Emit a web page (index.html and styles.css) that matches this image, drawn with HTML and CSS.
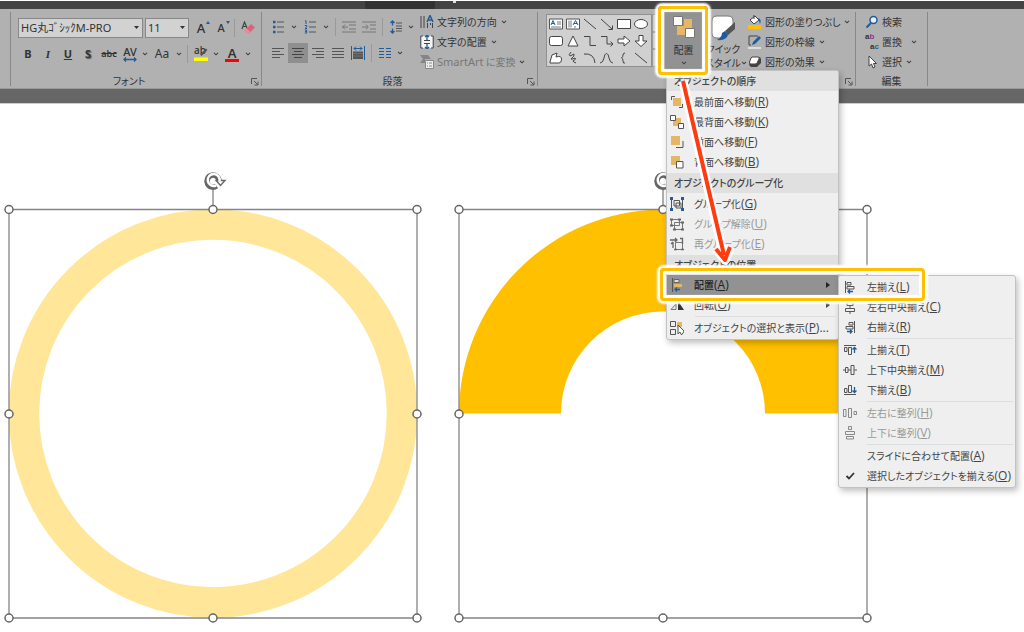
FILE: index.html
```html
<!DOCTYPE html>
<html lang="ja">
<head>
<meta charset="utf-8">
<title>オブジェクトの配置</title>
<link rel="stylesheet" href="styles.css">
</head>
<body>
<svg class="symbols" aria-hidden="true">
  <symbol id="chev" viewBox="0 0 6 4"><path d="M1 .8 3 2.8 5 .8" fill="none" stroke="#444" stroke-width="1.1"/></symbol>
  <symbol id="tri" viewBox="0 0 5 3"><path d="M0 0H5L2.500 3Z" fill="#333"/></symbol>
  <symbol id="launch" viewBox="0 0 8 8"><path d="M.5 6V.5H6M3 3 6.500 6.500M7 3.500V7H3.500" fill="none" stroke="#555"/></symbol>
</svg>

<header class="titlebar"><span class="active-tab"></span><span class="tick"></span></header>

<div class="ribbon">
  <section class="group font-group">
    <div class="body">
      <div class="row">
        <span class="combo family"><select aria-label="フォント名"><option>HG丸ｺﾞｼｯｸM-PRO</option></select><svg class="tri"><use href="#tri"/></svg></span>
        <span class="combo size"><select aria-label="フォント サイズ"><option>11</option></select><svg class="tri"><use href="#tri"/></svg></span>
        <button class="tool w20 big" aria-label="拡大">A<svg class="mark" viewBox="0 0 4 3"><path d="M0 3 2 0 4 3Z" fill="#1f5c99"/></svg></button>
        <button class="tool w20 mid" aria-label="縮小">A<svg class="mark" viewBox="0 0 4 3"><path d="M0 0H4L2 3Z" fill="#1f5c99"/></svg></button>
        <i class="sep"></i>
        <button class="tool w20" aria-label="書式のクリア"><svg width="14" height="14" viewBox="0 0 14 14"><path d="M1 8 3.500 1 6 7M2 5.500H5.500" fill="none" stroke="#444" stroke-width="1.200"/><path d="M3.500 9.500 10 3 14 6.500 7.500 13Z" fill="#dd6274"/><path d="M3.500 9.500 5.500 7.500 9.500 11 7.500 13Z" fill="#ee8b96"/></svg></button>
      </div>
      <div class="row">
        <button class="tool w20 bold">B</button>
        <button class="tool w20 bold italic">I</button>
        <button class="tool w20 bold under">U</button>
        <button class="tool w20 bold shade">S</button>
        <button class="tool w22 strike">abc</button>
        <button class="tool w20 spacing">AV<svg width="14" height="5" viewBox="0 0 14 5"><path d="M1 2.500H13M3 .5 1 2.500 3 4.500M11 .5 13 2.500 11 4.500" fill="none" stroke="#1f5c99" stroke-width="1.300"/></svg></button>
        <svg class="chev"><use href="#chev"/></svg>
        <button class="tool w24 aa">Aa</button>
        <svg class="chev"><use href="#chev"/></svg>
        <i class="sep"></i>
        <button class="tool w20 hl" aria-label="蛍光ペン">ab<svg width="14" height="14" viewBox="0 0 14 14"><path d="M6 7.500 12 1.500 13.500 3 7.500 9Z" fill="#555"/><path d="M0 10.500H14V14H0Z" fill="#ff0"/></svg></button>
        <svg class="chev"><use href="#chev"/></svg>
        <button class="tool w22 fc" aria-label="フォントの色">A<i></i></button>
        <svg class="chev"><use href="#chev"/></svg>
      </div>
    </div>
    <footer><span>フォント</span><button aria-label="フォントの詳細"><svg width="8" height="8"><use href="#launch"/></svg></button></footer>
  </section>

  <section class="group para-group">
    <div class="body split">
      <div class="stack">
        <div class="row">
          <button class="tool w20" aria-label="箇条書き"><svg width="13" height="14" viewBox="0 0 13 14"><path d="M1 2H3.500M1 7H3.500M1 12H3.500" stroke="#1f5c99" stroke-width="2.500"/><path d="M5 2H12M5 7H12M5 12H12" stroke="#555"/></svg></button>
          <svg class="chev wide"><use href="#chev"/></svg>
          <button class="tool w20" aria-label="段落番号"><svg width="13" height="14" viewBox="0 0 13 14"><path d="M1 .8H2V4M.8 5.500H2.700V7L1 8.500H3M.8 10H2.700V13H.8M1 11.500H2.500" fill="none" stroke="#1f5c99"/><path d="M5 2H12M5 7H12M5 12H12" stroke="#555"/></svg></button>
          <svg class="chev wide"><use href="#chev"/></svg>
          <i class="sep"></i>
          <button class="tool w20" aria-label="インデントを減らす" disabled><svg width="14" height="12" viewBox="0 0 14 12"><path d="M0 1H14M7 4H14M7 8H14M0 11H14M0 6H6M3 3.500 .8 6 3 8.500" fill="none" stroke="#777"/></svg></button>
          <button class="tool w20" aria-label="インデントを増やす" disabled><svg width="14" height="12" viewBox="0 0 14 12"><path d="M0 1H14M8 4H14M8 8H14M0 11H14M0 6H6M4 3.500 6.200 6 4 8.500" fill="none" stroke="#777"/></svg></button>
          <i class="sep"></i>
          <button class="tool w20" aria-label="行間"><svg width="13" height="14" viewBox="0 0 13 14"><path d="M2.500 1V5.500M.5 3 2.500 1 4.500 3M2.500 8.500V13M.5 11 2.500 13 4.500 11" fill="none" stroke="#1f5c99" stroke-width="1.300"/><path d="M6 3H12M6 6H12M6 8.500H12M6 11H12" stroke="#555"/></svg></button>
          <svg class="chev"><use href="#chev"/></svg>
        </div>
        <div class="row">
          <button class="tool w20" aria-label="左揃え"><svg width="12" height="11" viewBox="0 0 12 11"><path d="M0 .5H12M0 3.500H8M0 6.500H12M0 9.500H8" stroke="#555"/></svg></button>
          <button class="tool w20 on" aria-label="中央揃え"><svg width="12" height="11" viewBox="0 0 12 11"><path d="M0 .5H12M2 3.500H10M0 6.500H12M2 9.500H10" stroke="#444"/></svg></button>
          <button class="tool w20" aria-label="右揃え"><svg width="12" height="11" viewBox="0 0 12 11"><path d="M0 .5H12M4 3.500H12M0 6.500H12M4 9.500H12" stroke="#555"/></svg></button>
          <button class="tool w20" aria-label="両端揃え"><svg width="12" height="11" viewBox="0 0 12 11"><path d="M0 .5H12M0 3.500H12M0 6.500H12M0 9.500H12" stroke="#555"/></svg></button>
          <button class="tool w20" aria-label="均等割り付け"><svg width="14" height="14" viewBox="0 0 14 14"><path d="M.5 0V14M13.500 0V14M3 2.500H11M5 .5 3 2.500 5 4.500M9 .5 11 2.500 9 4.500" fill="none" stroke="#1f5c99"/><path d="M2 5.500H12V13H2Z" fill="#555"/><path d="M2 7.500H12M2 10H12" stroke="#888" stroke-width=".6"/></svg></button>
          <i class="sep"></i>
          <button class="tool w20" aria-label="段組み"><svg width="12" height="10" viewBox="0 0 12 10"><path d="M0 .5H5M0 3.500H5M0 6.500H5M0 9.500H5M7 .5H12M7 3.500H12M7 6.500H12M7 9.500H12" stroke="#1f5c99"/></svg></button>
          <svg class="chev"><use href="#chev"/></svg>
        </div>
      </div>
      <div class="list">
        <button class="cmd"><svg width="14" height="14" viewBox="0 0 14 14"><path d="M1 1V13M4 1V13M7.500 8V13M10.500 8V10M12.500 8V13" stroke="#444"/><path d="M7 7 10 .5 13 7M8 5H12" fill="none" stroke="#1f5c99" stroke-width="1.500"/></svg>文字列の方向<svg class="chev"><use href="#chev"/></svg></button>
        <button class="cmd"><svg width="14" height="14" viewBox="0 0 14 14"><path d="M1 1H13V13H1Z" fill="#f4f4f4"/><path d="M3 1H.8V13H3M11 1H13.200V13H11M4 5.500H10M4 8.500H10" fill="none" stroke="#444"/><path d="M7 0V5M5 2 7 0 9 2M7 9V14M5 12 7 14 9 12" fill="none" stroke="#1f5c99" stroke-width="1.300"/></svg>文字の配置<svg class="chev"><use href="#chev"/></svg></button>
        <button class="cmd" disabled><svg width="14" height="14" viewBox="0 0 14 14"><path d="M0 0H8L11 4H5V8H0L3 4Z" fill="#858585"/><path d="M5.500 5.500H13.500V13.500H5.500Z" fill="#ededed" stroke="#888"/><path d="M7 8H8M9 8H12M7 11H8M9 11H12" stroke="#888"/></svg><span><span class="latin">SmartArt</span> に変換</span><svg class="chev"><use href="#chev"/></svg></button>
      </div>
    </div>
    <footer><span>段落</span><button aria-label="段落の詳細"><svg width="8" height="8"><use href="#launch"/></svg></button></footer>
  </section>

  <section class="group draw-group">
    <div class="body split">
      <div class="gallery">
        <button aria-label="テキスト"><svg viewBox="0 0 14 12"><path d="M.5 1H13.500V11H.5Z" fill="#fff" stroke="#555"/><path d="M2 7 4 2.500 6 7M3 5.500H5" fill="none" stroke="#1f5c99"/><path d="M8 4H12M8 6H12M2 9H12" stroke="#555" stroke-width=".8"/></svg></button>
        <button aria-label="縦書き"><svg viewBox="0 0 14 12"><path d="M.5 1H13.500V11H.5Z" fill="#fff" stroke="#555"/><path d="M7 7 9.500 2.500 12 7M8 5.500H11" fill="none" stroke="#1f5c99"/><path d="M3 2.500V9.500M5 2.500V9.500M9 8V10" stroke="#555" stroke-width=".8"/></svg></button>
        <button aria-label="直線"><svg viewBox="0 0 14 12"><path d="M1 1 13 11" stroke="#444"/></svg></button>
        <button aria-label="矢印"><svg viewBox="0 0 14 12"><path d="M1 1 12 11M12.500 7.500V11.500H8.500" fill="none" stroke="#444"/></svg></button>
        <button aria-label="四角形"><svg viewBox="0 0 14 12"><path d="M.5 1.500H13.500V10.500H.5Z" fill="#fff" stroke="#444"/></svg></button>
        <button aria-label="楕円"><svg viewBox="0 0 14 12"><ellipse cx="7" cy="6" rx="6.500" ry="4.500" fill="#fff" stroke="#444"/></svg></button>
        <button aria-label="角丸四角形"><svg viewBox="0 0 14 12"><rect x=".5" y="1.500" width="13" height="9" rx="2" fill="#fff" stroke="#444"/></svg></button>
        <button aria-label="三角形"><svg viewBox="0 0 14 12"><path d="M2 11 7 1 12 11Z" fill="#fff" stroke="#444"/></svg></button>
        <button aria-label="カギ線"><svg viewBox="0 0 14 12"><path d="M1 1.500H7V10.500H13" fill="none" stroke="#444"/></svg></button>
        <button aria-label="カギ線矢印"><svg viewBox="0 0 14 12"><path d="M1 1.500H7V9H13M10.500 6.500 13 9 10.500 11.500" fill="none" stroke="#444"/></svg></button>
        <button aria-label="右矢印"><svg viewBox="0 0 14 12"><path d="M1 4H7V1L13 6 7 11V8H1Z" fill="#fff" stroke="#444"/></svg></button>
        <button aria-label="下矢印"><svg viewBox="0 0 14 12"><path d="M5 .5H9V6H13L7 11.500 1 6H5Z" fill="#fff" stroke="#444"/></svg></button>
        <button aria-label="フリーフォーム"><svg viewBox="0 0 14 12"><path d="M1 10 3 3 8 1 7 5Q13 3 12.500 8 12 11 10 11H1Z" fill="#fff" stroke="#444"/></svg></button>
        <button aria-label="フリーハンド"><svg viewBox="0 0 14 12"><path d="M5 0Q2 3 4 4 6 3 8 2 9 4 5 7 5 8 9 6 11 7 7 9 7 10 10 11" fill="none" stroke="#444"/></svg></button>
        <button aria-label="円弧"><svg viewBox="0 0 14 12"><path d="M1 2Q11 1 12 11" fill="none" stroke="#444"/></svg></button>
        <button aria-label="曲線"><svg viewBox="0 0 14 12"><path d="M0 11Q3 11 4 6C5 0 8 0 9 6Q10 11 13 11" fill="none" stroke="#444"/></svg></button>
        <button aria-label="左中かっこ"><svg viewBox="0 0 14 12"><path d="M8 1Q6 1 6 3T4.500 6Q6 6 6 9T8 11" fill="none" stroke="#444"/></svg></button>
        <button aria-label="線"><svg viewBox="0 0 14 12"><path d="M1 1 13 11" stroke="#444"/></svg></button>
      </div>
      <div class="scroller"><i></i><i></i><i></i></div>
      <button class="large arrange">
        <svg width="24" height="24" viewBox="0 0 24 24"><path d="M12 4H20V13H12ZM5 11H13V20H5Z" fill="#e6b667"/><path d="M1.500 1.500H10.500V10.500H1.500ZM13.500 13.500H22.500V22.500H13.500Z" fill="#fff" stroke="#777"/></svg>
        <span>配置</span><svg class="chev"><use href="#chev"/></svg>
      </button>
      <button class="large quick">
        <svg width="26" height="28" viewBox="0 0 26 28"><path d="M7 2H18Q23 2 23 7V15L15 24H7Q2 24 2 19V7Q2 2 7 2Z" fill="#fff" stroke="#777"/><path d="M15 17 25 8V15L18 21Z" fill="#555"/><path d="M15 17 18 20Q17 27 7 26 12 23 12 19Z" fill="#1f5c99"/></svg>
        <span class="two">クイック<br>スタイル</span>
      </button>
      <svg class="chev low"><use href="#chev"/></svg>
      <div class="list">
        <button class="cmd"><svg width="14" height="14" viewBox="0 0 14 14"><path d="M0 10H13V14H0Z" fill="#ffc000"/><path d="M2 5 7 1 11 5 6 9Z" fill="#fff" stroke="#444"/><path d="M6 0V4" stroke="#444"/><path d="M10 3Q14 4 12 9L11 6Z" fill="#1f5c99"/></svg>図形の塗りつぶし<svg class="chev"><use href="#chev"/></svg></button>
        <button class="cmd"><svg width="14" height="14" viewBox="0 0 14 14"><path d="M10 1H1V10H3" fill="none" stroke="#444"/><path d="M4 10 5 7 11 1 13 3 7 9Z" fill="#1f5c99"/><path d="M0 12H13V14H0Z" fill="#ddd"/></svg>図形の枠線<svg class="chev"><use href="#chev"/></svg></button>
        <button class="cmd"><svg width="14" height="14" viewBox="0 0 14 14"><path d="M4 2H12L13 4V8L9 12H3L1 10Z" fill="#444"/><path d="M4 2H10Q12 2 11 4L9 8Q8.500 9 7 9H3Q1 9 1.500 7L3 3Z" fill="#fff" stroke="#444"/></svg>図形の効果<svg class="chev"><use href="#chev"/></svg></button>
      </div>
    </div>
    <footer><button aria-label="図形の書式設定"><svg width="8" height="8"><use href="#launch"/></svg></button></footer>
  </section>

  <section class="group edit-group">
    <div class="body">
      <div class="list">
        <button class="cmd"><svg width="14" height="14" viewBox="0 0 14 14"><circle cx="8.500" cy="5" r="3.500" fill="#eee" stroke="#1f5c99" stroke-width="1.500"/><path d="M6 8 1.500 12.500" stroke="#1f5c99" stroke-width="2"/></svg>検索</button>
        <button class="cmd"><span class="swap"><span>a<b>b</b></span><span>a<em>c</em></span></span>置換<svg class="chev far"><use href="#chev"/></svg></button>
        <button class="cmd"><svg width="14" height="14" viewBox="0 0 14 14"><path d="M4 1V11L6.500 9 8 13 10 12 8.500 8.500H11.500Z" fill="#fff" stroke="#444"/></svg>選択<svg class="chev"><use href="#chev"/></svg></button>
      </div>
    </div>
    <footer><span>編集</span></footer>
  </section>
</div>
<div class="band"></div>

<main class="canvas">
  <svg class="shape ring" width="420" height="456" viewBox="0 0 420 456">
    <circle cx="210" cy="246.500" r="189" fill="none" stroke="#ffe699" stroke-width="30.500"/>
    <path d="M6 42.500H414V451H6ZM210 42V22" fill="none" stroke="#858585" stroke-width="1.300"/>
    <g fill="#fff" stroke="#666" stroke-width="1.500"><circle cx="6" cy="42.500" r="4"/><circle cx="210" cy="42.500" r="4"/><circle cx="414" cy="42.500" r="4"/><circle cx="6" cy="247" r="4"/><circle cx="414" cy="247" r="4"/><circle cx="6" cy="451" r="4"/><circle cx="210" cy="451" r="4"/><circle cx="414" cy="451" r="4"/></g>
    <path d="M216 14A6 6 0 1 0 213.500 19" fill="none" stroke="#666" stroke-width="5.500"/><path d="M213 13.500H222L217.500 18.500Z" fill="#fff" stroke="#666" stroke-width="1.400"/><path d="M216.500 14.500A6 6 0 1 0 213 18.500" fill="none" stroke="#fff" stroke-width="2.500"/>
  </svg>
  <svg class="shape arc" width="420" height="456" viewBox="0 0 420 456">
    <path d="M6 246.500A204 204 0 0 1 414 246.500H312A102 102 0 0 0 108 246.500Z" fill="#ffc000"/>
    <path d="M6 42.500H414V451H6ZM210 42V22" fill="none" stroke="#858585" stroke-width="1.300"/>
    <g fill="#fff" stroke="#666" stroke-width="1.500"><circle cx="6" cy="42.500" r="4"/><circle cx="210" cy="42.500" r="4"/><circle cx="414" cy="42.500" r="4"/><circle cx="6" cy="247" r="4"/><circle cx="414" cy="247" r="4"/><circle cx="6" cy="451" r="4"/><circle cx="210" cy="451" r="4"/><circle cx="414" cy="451" r="4"/></g>
    <path d="M216 14A6 6 0 1 0 213.500 19" fill="none" stroke="#666" stroke-width="5.500"/><path d="M216.500 14.500A6 6 0 1 0 213 18.500" fill="none" stroke="#fff" stroke-width="2.500"/>
  </svg>
</main>

<nav class="menu main-menu">
  <h2>オブジェクトの順序</h2>
  <div class="items">
    <button><svg viewBox="0 0 14 14"><path d="M5 1.500H1.500V5M9 12.500H12.500V9" fill="none" stroke="#555"/><path d="M3 3H11V11H3Z" fill="#e6b667"/></svg><span>最前面へ移動<span class="key">(<u>R</u>)</span></span></button>
    <button><svg viewBox="0 0 14 14"><path d="M3 3H11V11H3Z" fill="#e6b667"/><path d="M.5 .5H5.500V5.500H.5ZM8.500 8.500H13.500V13.500H8.500Z" fill="#fff" stroke="#555"/></svg><span>最背面へ移動<span class="key">(<u>K</u>)</span></span></button>
    <button><svg viewBox="0 0 14 14"><path d="M13 6V12.500H6" fill="none" stroke="#555"/><path d="M1 1H10V10H1Z" fill="#e6b667"/></svg><span>前面へ移動<span class="key">(<u>F</u>)</span></span></button>
    <button><svg viewBox="0 0 14 14"><path d="M1 1H10V10H1Z" fill="#e6b667"/><path d="M6.500 6.500H13V13H6.500Z" fill="#fff" stroke="#555"/></svg><span>背面へ移動<span class="key">(<u>B</u>)</span></span></button>
  </div>
  <h2>オブジェクトのグループ化</h2>
  <div class="items">
    <button><svg viewBox="0 0 14 14"><path d="M4 3.500H9.500V9H4ZM6 6H11V11H6ZM1.500 3V11M12.500 3V11" fill="none" stroke="#555"/><path d="M0 0H3V3H0ZM11 0H14V3H11ZM0 11H3V14H0ZM11 11H14V14H11Z" fill="#1f5c99"/></svg><span>グループ化<span class="key">(<u>G</u>)</span></span></button>
    <button disabled><svg viewBox="0 0 14 14"><path d="M1.500 2.500H9.500V8.500H1.500ZM4.500 5.500H12.500V12.500H4.500Z" fill="none" stroke="#777"/><path d="M0 2.500H3M8 2.500H11M0 8.500H3M3 12.500H6M11 12.500H14M11 5.500H14" stroke="#666" stroke-width="2"/></svg><span>グループ解除<span class="key">(<u>U</u>)</span></span></button>
    <button disabled><svg viewBox="0 0 14 14"><path d="M5.500 5.500H12.500V12.500H5.500Z" fill="none" stroke="#777"/><path d="M0 3H7M5 1 7 3 5 5M3 5V11M1 7 3 5M4 12.500H7M11 12.500H14M12.500 1V7M10 1.500H13" fill="none" stroke="#666" stroke-width="1.300"/></svg><span>再グループ化<span class="key">(<u>E</u>)</span></span></button>
  </div>
  <h2>オブジェクトの位置</h2>
  <button class="selected"><svg viewBox="0 0 14 14"><path d="M2.500 0V14" stroke="#555"/><path d="M4 1.500H9V4.500H4Z" fill="#ddd" stroke="#666"/><path d="M4 6H12V9H4Z" fill="#e6b667"/><path d="M5 11.500H10M7 9.500 5 11.500 7 13.500" fill="none" stroke="#1f5c99" stroke-width="1.300"/></svg><span>配置<span class="key">(<u>A</u>)</span></span><svg class="sub" viewBox="0 0 4 6"><path d="M0 0 4 3 0 6Z" fill="#222"/></svg></button>
  <button><svg viewBox="0 0 14 14"><path d="M1 11.500H6V6Z" fill="none" stroke="#777"/><path d="M8 12V3L14 12Z" fill="#333"/></svg><span>回転<span class="key">(<u>O</u>)</span></span><svg class="sub" viewBox="0 0 4 6"><path d="M0 0 4 3 0 6Z" fill="#444"/></svg></button>
  <hr>
  <button><svg viewBox="0 0 14 14"><path d="M.5 .5H5.500V5.500H.5ZM.5 8.500H5.500V13.500H.5Z" fill="none" stroke="#555"/><path d="M7 1H12V6H7Z" fill="#e6b667"/><path d="M8 4V13L10 11 11.500 14 13 12 14 10Z" fill="#fff" stroke="#555"/></svg><span>オブジェクトの選択と表示<span class="key">(<u>P</u>)...</span></span></button>
</nav>

<nav class="menu sub-menu">
  <button><svg viewBox="0 0 14 14"><path d="M2.500 1V13M4 2.500H8V5H4ZM4 6.500H11V9H4Z" fill="none" stroke="#555"/><path d="M5 11.500H10M7 9.500 5 11.500 7 13.500" fill="none" stroke="#1f5c99" stroke-width="1.300"/></svg><span>左揃え<span class="key">(<u>L</u>)</span></span></button>
  <button><svg viewBox="0 0 14 14"><path d="M4 2.500H10V5.500H4ZM2.500 8.500H11.500V11.500H2.500ZM7 0V2.500M7 5.500V8.500M7 11.500V14" fill="none" stroke="#555"/></svg><span>左右中央揃え<span class="key">(<u>C</u>)</span></span></button>
  <button><svg viewBox="0 0 14 14"><path d="M11.500 1V13M6 2.500H10V5H6ZM3 6.500H10V9H3Z" fill="none" stroke="#555"/><path d="M4 11.500H9M7 9.500 9 11.500 7 13.500" fill="none" stroke="#1f5c99" stroke-width="1.300"/></svg><span>右揃え<span class="key">(<u>R</u>)</span></span></button>
  <hr>
  <button><svg viewBox="0 0 14 14"><path d="M1 2.500H13M1.500 4.500H4V8.500H1.500ZM5.500 4.500H8.500V11.500H5.500Z" fill="none" stroke="#555"/><path d="M11.500 4.500V10M9.500 6.500 11.500 4.500 13.500 6.500" fill="none" stroke="#1f5c99" stroke-width="1.300"/></svg><span>上揃え<span class="key">(<u>T</u>)</span></span></button>
  <button><svg viewBox="0 0 14 14"><path d="M2.500 4.500H5V9.500H2.500ZM8 2.500H11V11.500H8ZM0 7H2.500M5 7H8M11 7H14" fill="none" stroke="#555"/></svg><span>上下中央揃え<span class="key">(<u>M</u>)</span></span></button>
  <button><svg viewBox="0 0 14 14"><path d="M1 11.500H13M1.500 5.500H4V9.500H1.500ZM5.500 2.500H8.500V9.500H5.500Z" fill="none" stroke="#555"/><path d="M11.500 4V9.500M9.500 7.500 11.500 9.500 13.500 7.500" fill="none" stroke="#1f5c99" stroke-width="1.300"/></svg><span>下揃え<span class="key">(<u>B</u>)</span></span></button>
  <hr>
  <button disabled><svg viewBox="0 0 14 14"><path d="M.5 3.500H3V10.500H.5ZM5.500 2.500H8.500V11.500H5.500ZM11 5.500H13.500V8.500H11Z" fill="none" stroke="#888"/></svg><span>左右に整列<span class="key">(<u>H</u>)</span></span></button>
  <button disabled><svg viewBox="0 0 14 14"><path d="M5.500 .5H8.500V3.500H5.500ZM2.500 5.500H11.500V8.500H2.500ZM3.500 10.500H10.500V13H3.500Z" fill="none" stroke="#888"/></svg><span>上下に整列<span class="key">(<u>V</u>)</span></span></button>
  <hr>
  <button><i></i><span>スライドに合わせて配置<span class="key">(<u>A</u>)</span></span></button>
  <button><svg viewBox="0 0 14 14"><path d="M3.500 7 6 9.500 11 4" fill="none" stroke="#333" stroke-width="1.800"/></svg><span>選択したオブジェクトを揃える<span class="key">(<u>O</u>)</span></span></button>
</nav>

<div class="callout step-one"></div>
<div class="callout step-two"></div>
<svg class="arrow" width="64" height="196" viewBox="0 0 64 196"><g fill="none" stroke-linejoin="round"><path d="M13 10 54 186M46 178 55 189 61 176" stroke="#fff" stroke-width="9"/><path d="M13 10 54 184M46 178 55 189 60 176" stroke="#ff3b0f" stroke-width="4"/></g></svg>
</body>
</html>
```
FILE: styles.css
```css
* { box-sizing: border-box; }

body {
  margin: 0;
  min-height: 100vh;
  display: flex;
  flex-direction: column;
  position: relative;
  overflow: hidden;
  background: #fff;
  color: #333;
  font: 10px/14px "Noto Sans CJK JP", sans-serif;
  font-feature-settings: "palt";
}

button {
  margin: 0;
  padding: 0;
  border: 0;
  background: none;
  color: inherit;
  font: inherit;
  font-feature-settings: inherit;
  white-space: nowrap;
}

.symbols { position: absolute; width: 0; height: 0; }

.titlebar {
  height: 9px;
  border-top: 1px solid #fff;
  background: #444;
  padding-left: 365px;
  display: flex;
  gap: 18px;
}
.active-tab { width: 70px; background: #333; }
.tick { width: 3px; height: 2px; background: #ddd; }

/* Ribbon */
.ribbon {
  display: flex;
  padding: 3px 0 2px 10px;
  background: #b1b1b1;
  border-bottom: 1px solid #999;
}
.group {
  border-right: 1px solid #888;
  display: flex;
  flex-direction: column;
  height: 74px;
}
.font-group { width: 252px; border-left: 1px solid #888; }
.para-group { width: 276px; }
.draw-group { width: 318px; }
.edit-group { width: 72px; }
.body { flex: 1; }
.split { display: flex; }
.group footer {
  height: 14px;
  line-height: 18px;
  display: flex;
  justify-content: center;
  position: relative;
}
.font-group footer, .para-group footer { padding-right: 14px; }
.group footer button { position: absolute; right: 2px; bottom: 0; height: 9px; line-height: 0; }

.row { display: flex; align-items: center; height: 20px; }
.font-group .body { padding: 6px 0 0 7px; }
.row + .row { margin-top: 6px; }
.stack { padding: 5px 0 0 6px; width: 156px; }

.combo {
  display: flex;
  position: relative;
  height: 20px;
  margin-right: 2px;
}
.combo select {
  appearance: none;
  width: 100%;
  margin: 0;
  padding: 0 2px;
  border: 1px solid #888;
  border-radius: 0;
  background: #d2d2d2;
  color: #333;
  font: 11px/18px "Noto Sans", "Noto Sans CJK JP", sans-serif;
}
.family { width: 125px; }
.size { width: 44px; }
.tri { position: absolute; right: 4px; top: 8px; width: 5px; height: 3px; }

.tool {
  display: flex;
  align-items: center;
  justify-content: center;
  position: relative;
  height: 20px;
  flex: none;
  font: 11px/16px "Noto Sans", sans-serif;
}
.w20 { width: 20px; }
.w22 { width: 22px; }
.w24 { width: 24px; }
.big { font-size: 13px; font-weight: 500; }
.mid { font-weight: 500; }
.mark { position: absolute; right: 1px; top: 3px; width: 4px; height: 3px; }
.bold { font-weight: 700; }
.italic { font-style: italic; font-family: "Liberation Serif", serif; }
.under { text-decoration: underline; }
.shade { text-shadow: 1px 1px 1px #555; }
.strike { text-decoration: line-through; font-size: 9px; font-weight: 600; }
.spacing { flex-direction: column; font-size: 11px; line-height: 10px; font-weight: 500; }
.aa { font-size: 12px; }
.hl { font-size: 10px; line-height: 12px; font-weight: 500; align-items: flex-start; justify-content: flex-start; padding-left: 3px; }
.hl svg { position: absolute; left: 3px; top: 3px; }
.fc { flex-direction: column; font-size: 13px; line-height: 12px; font-weight: 600; }
.fc i { width: 14px; height: 3px; background: #f00; }
.on { background: #8f8f8f; }

.chev { width: 6px; height: 4px; margin: 0 2px; flex: none; }
.chev.wide { margin: 0 3px; }
.sep { width: 1px; height: 18px; margin: 0 3px; background: #999; flex: none; }

.list { display: flex; flex-direction: column; }
.cmd { display: flex; align-items: center; gap: 3px; height: 20px; text-align: left; }
.cmd:disabled { color: #777; }
.cmd .chev { margin-left: 1px; }
.cmd .far { margin-left: 6px; }
.latin { font: 11px/14px "Noto Sans", sans-serif; }
.para-group .list { padding-left: 2px; }

.gallery {
  display: grid;
  grid-template-columns: repeat(6, 17px);
  grid-auto-rows: 17px;
  width: 106px;
  height: 53px;
  margin: 2px 0 0 8px;
  padding: 0;
  border: 1px solid #909090;
  background: #d0d0d0;
}
.gallery button { display: grid; place-items: center; }
.gallery svg { width: 14px; height: 12px; }
.scroller { width: 11px; height: 53px; margin-top: 2px; display: grid; }
.scroller i { border: 1px solid #999; background: #ccc; }

.large { display: flex; flex-direction: column; align-items: center; }
.arrange { width: 37px; height: 58px; margin-left: 2px; padding: 3px 0 5px; background: #929292; justify-content: space-between; }
.quick { width: 36px; padding-top: 2px; margin-left: 3px; }
.two { line-height: 14px; text-align: center; }
.low { margin: 49px 1px 0 0; }

.edit-group .list { padding-left: 9px; }
.swap { width: 14px; font: 700 8px/10px "Liberation Sans", sans-serif; display: grid; }
.swap span + span { text-align: right; }
.swap b { color: #80399b; }
.swap em { color: #1f5c99; font-style: normal; }

.band { height: 15px; background: #666; border-bottom: 1px solid #ccc; }

/* Slide */
.canvas { position: relative; flex: 1; min-height: 528px; }
.shape { position: absolute; top: 63px; }
.ring { left: 3px; }
.arc { left: 453px; }

/* Menus */
.menu {
  position: absolute;
  padding: 1px 0;
  border: 1px solid #c2c2c2;
  border-radius: 3px;
  background: #efefef;
  color: #444;
  box-shadow: 2px 3px 6px rgba(0, 0, 0, .25);
}
.main-menu { left: 666px; top: 70px; width: 173px; padding-top: 0; }
.sub-menu { left: 838px; top: 275px; width: 178px; }
.menu h2 {
  margin: 0;
  padding-left: 7px;
  background: #e0e0e0;
  color: #444;
  font-size: 10px;
  font-weight: 500;
  line-height: 20px;
}
.items { padding: 1px 0; }
.menu button {
  display: flex;
  align-items: center;
  width: 100%;
  height: 20px;
  padding-left: 4px;
  gap: 10px;
  line-height: 20px;
}
.main-menu button { padding-left: 3px; }
.menu button > svg, .menu button > i { width: 14px; height: 14px; flex: none; }
.menu button:disabled { color: #999; }
.menu .selected { background: #929292; color: #222; font-weight: 500; }
.menu button > .sub { width: 4px; height: 6px; margin: 0 8px 0 auto; }
.menu hr { margin: 1px 2px 1px 28px; border: 0; border-top: 1px solid #dcdfe2; }
.key { font: 12px/20px "Open Sans", sans-serif; }

/* Annotations */
.callout {
  position: absolute;
  border: 3px solid #ffc000;
  border-radius: 4px;
  box-shadow: 0 0 2px 3px #fff, inset 0 0 1px 3px #fff;
}
.step-one { left: 658px; top: 6px; width: 50px; height: 69px; }
.step-two { left: 660px; top: 268px; width: 265px; height: 33px; }
.arrow { position: absolute; left: 670px; top: 71px; }
```
